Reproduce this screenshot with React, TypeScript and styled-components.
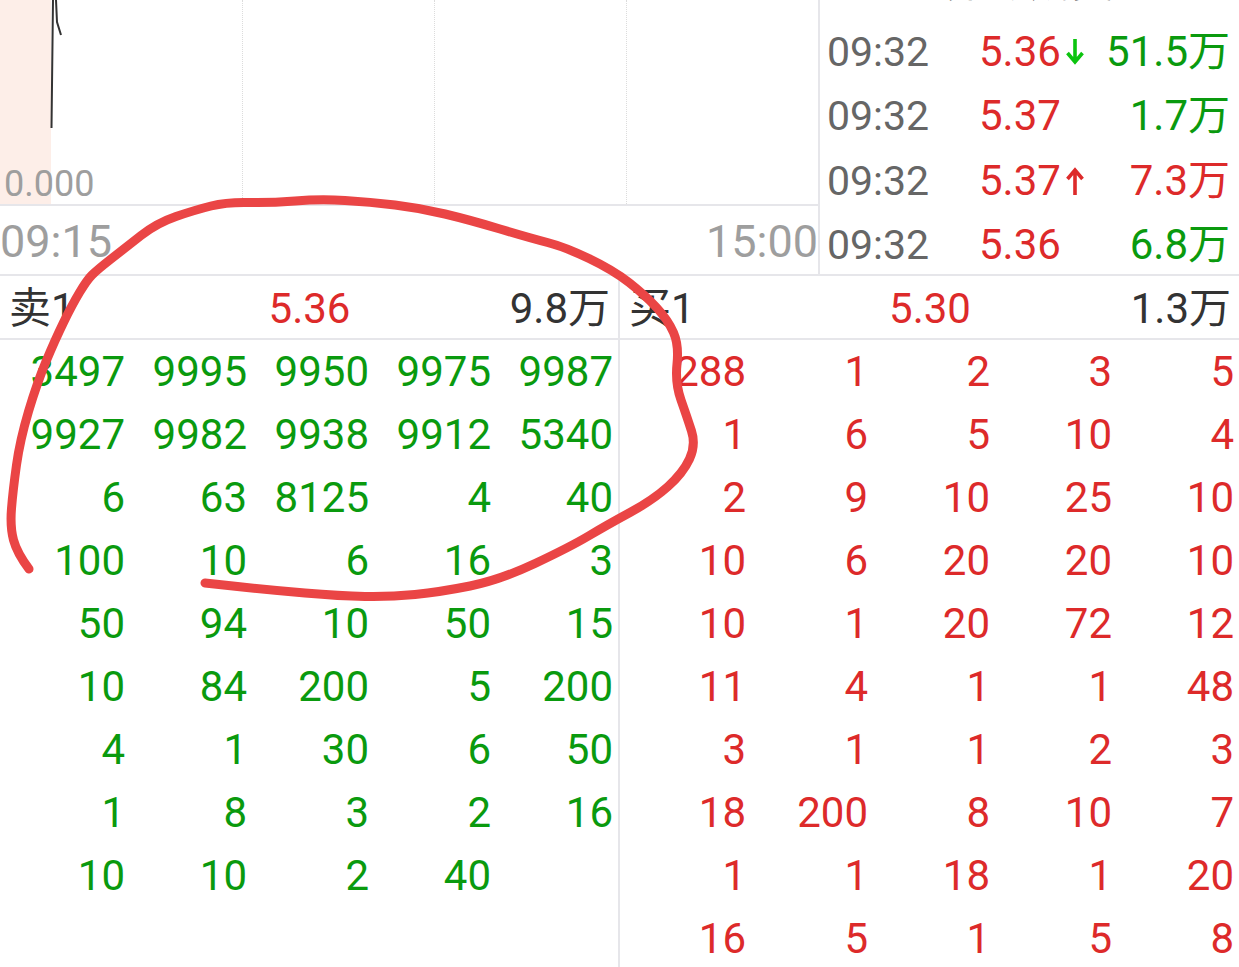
import styled, { createGlobalStyle } from 'styled-components'

const GREEN = '#0a9a0e'
const RED = '#dd2a2a'
const LINE = '#e6e6ea'

const GlobalStyle = createGlobalStyle`
  html, body {
    margin: 0;
    padding: 0;
    background: #fff;
    overflow: hidden;
  }
  body {
    font-family: Roboto, "Noto Sans CJK SC", sans-serif;
  }
`

const Screen = styled.div`
  position: relative;
  width: 1239px;
  height: 967px;
  overflow: hidden;
  font-size: 42px;
  line-height: 50px;
  background: #fff;
`

const Top = styled.div`
  display: flex;
  height: 276px;
  box-sizing: border-box;
  border-bottom: 2px solid ${LINE};
`

const ChartPane = styled.div`
  width: 820px;
  flex: none;
  box-sizing: border-box;
  border-right: 2px solid ${LINE};
`

const Plot = styled.div`
  position: relative;
  display: flex;
  height: 206px;
  box-sizing: border-box;
  border-bottom: 2px solid ${LINE};
`

const Band = styled.div`
  width: 51px;
  flex: none;
  background: #fdeee8;
`

const GridCell = styled.div`
  width: 192px;
  flex: none;
  box-sizing: border-box;
  border-right: 1px dotted #dcdcdc;
`

const PriceLine = styled.svg`
  position: absolute;
  left: 0;
  top: 0;
`

const ZeroLabel = styled.span`
  position: absolute;
  left: 4px;
  top: 163px;
  font-size: 36px;
  line-height: 42px;
  color: #9e9e9e;
`

const Axis = styled.div`
  display: flex;
  justify-content: space-between;
  align-items: center;
  height: 68px;
  padding-top: 3px;
  box-sizing: border-box;
  font-size: 45px;
  color: #9e9e9e;
`

const TickPane = styled.div`
  flex: 1;
  padding-top: 20px;
  position: relative;
`

const TickTitle = styled.div`
  position: absolute;
  left: 0;
  right: 0;
  top: 0;
  height: 4px;
  overflow: hidden;
  display: flex;
  justify-content: center;
  align-items: flex-end;
  line-height: 42px;
  color: #555;
`

const TickRow = styled.div`
  display: flex;
  align-items: center;
  height: 64.3px;
  padding: 0 9px 0 7px;
`

const TickTime = styled.span`
  width: 152px;
  flex: none;
  font-size: 41px;
  color: #666;
`

const TickPrice = styled.span`
  display: flex;
  align-items: center;
  color: ${RED};
  flex: 1;
`

const Volume = styled.span<{ $up?: boolean }>`
  color: ${({ $up }) => ($up ? RED : GREEN)};
`

const Book = styled.div`
  display: flex;
  height: 691px;
`

const Side = styled.div<{ $divided?: boolean }>`
  width: ${({ $divided }) => ($divided ? '620px' : '619px')};
  flex: none;
  box-sizing: border-box;
  border-right: ${({ $divided }) => ($divided ? `2px solid ${LINE}` : 'none')};
`

const BestRow = styled.div`
  display: grid;
  grid-template-columns: 1fr auto 1fr;
  align-items: center;
  height: 64px;
  box-sizing: border-box;
  border-bottom: 2px solid ${LINE};
  padding: 4px 8px 0 9px;
  color: #333;
`

const BestPrice = styled.span`
  color: ${RED};
`

const BestQty = styled.span`
  text-align: right;
`

const Orders = styled.div<{ $left: number; $right: number; $color: string }>`
  display: grid;
  grid-template-columns: repeat(5, 1fr);
  grid-auto-rows: 63px;
  align-items: center;
  padding: 0 ${({ $right }) => $right}px 0 ${({ $left }) => $left}px;
  color: ${({ $color }) => $color};
`

const Qty = styled.span`
  text-align: right;
`

const Scribble = styled.svg`
  position: absolute;
  left: 0;
  top: 0;
  pointer-events: none;
`

const ticks = [
  { price: '5.36', arrow: 'down', volume: '51.5万', up: false },
  { price: '5.37', arrow: '', volume: '1.7万', up: false },
  { price: '5.37', arrow: 'up', volume: '7.3万', up: true },
  { price: '5.36', arrow: '', volume: '6.8万', up: false },
]

const asks = [
  [3497, 9995, 9950, 9975, 9987],
  [9927, 9982, 9938, 9912, 5340],
  [6, 63, 8125, 4, 40],
  [100, 10, 6, 16, 3],
  [50, 94, 10, 50, 15],
  [10, 84, 200, 5, 200],
  [4, 1, 30, 6, 50],
  [1, 8, 3, 2, 16],
  [10, 10, 2, 40, ''],
]

const bids = [
  [288, 1, 2, 3, 5],
  [1, 6, 5, 10, 4],
  [2, 9, 10, 25, 10],
  [10, 6, 20, 20, 10],
  [10, 1, 20, 72, 12],
  [11, 4, 1, 1, 48],
  [3, 1, 1, 2, 3],
  [18, 200, 8, 10, 7],
  [1, 1, 18, 1, 20],
  [16, 5, 1, 5, 8],
]

const scribblePoints = [
  [29, 569], [17, 553], [10, 527], [13, 490], [20, 440], [37, 383], [55, 340], [72, 305],
  [87, 280], [97, 270], [125, 248], [157, 223], [195, 210], [227, 202], [270, 203], [320, 199],
  [370, 202], [420, 208], [470, 220], [530, 238], [565, 247], [613, 270], [645, 295],
  [668, 320], [679, 345], [675, 383], [687, 417], [696, 445], [683, 473], [653, 500], [607, 525],
  [570, 547], [500, 580], [440, 592], [390, 597], [340, 596], [270, 590], [205, 583],
]

const smoothPath = (points: number[][]) => {
  let d = `M${points[0][0]} ${points[0][1]}`
  for (let i = 1; i < points.length - 1; i++) {
    const midX = (points[i][0] + points[i + 1][0]) / 2
    const midY = (points[i][1] + points[i + 1][1]) / 2
    d += ` Q${points[i][0]} ${points[i][1]} ${midX} ${midY}`
  }
  const last = points[points.length - 1]
  return `${d} L${last[0]} ${last[1]}`
}

const Arrow = ({ dir }: { dir: string }) => (
  <svg width="22" height="30" viewBox="0 0 22 30" style={{ marginLeft: 3 }}>
    {dir === 'down' ? (
      <path d="M11 2V25M3.5 16L11 25L18.5 16" fill="none" stroke="#0cc40f" strokeWidth="3.6" />
    ) : (
      <path d="M11 29V4M3.5 13L11 4L18.5 13" fill="none" stroke={RED} strokeWidth="3.6" />
    )}
  </svg>
)

export default function App() {
  return (
    <Screen>
      <GlobalStyle />
      <Top>
        <ChartPane>
          <Plot>
            <Band />
            <GridCell />
            <GridCell />
            <GridCell />
            <PriceLine width="70" height="130">
              <path d="M51.5 128L53 0M56 0L57 22L61 35" fill="none" stroke="#333" strokeWidth="2" />
            </PriceLine>
            <ZeroLabel>0.000</ZeroLabel>
          </Plot>
          <Axis>
            <span>09:15</span>
            <span>15:00</span>
          </Axis>
        </ChartPane>
        <TickPane>
          <TickTitle>
            <span>分时成交</span>
          </TickTitle>
          {ticks.map((tick, i) => (
            <TickRow key={i}>
              <TickTime>09:32</TickTime>
              <TickPrice>
                {tick.price}
                {tick.arrow && <Arrow dir={tick.arrow} />}
              </TickPrice>
              <Volume $up={tick.up}>{tick.volume}</Volume>
            </TickRow>
          ))}
        </TickPane>
      </Top>
      <Book>
        <Side $divided>
          <BestRow>
            <span>卖1</span>
            <BestPrice>5.36</BestPrice>
            <BestQty>9.8万</BestQty>
          </BestRow>
          <Orders $left={3} $right={5} $color={GREEN}>
            {asks.flat().map((n, i) => (
              <Qty key={i}>{n}</Qty>
            ))}
          </Orders>
        </Side>
        <Side>
          <BestRow>
            <span>买1</span>
            <BestPrice>5.30</BestPrice>
            <BestQty>1.3万</BestQty>
          </BestRow>
          <Orders $left={4} $right={5} $color={RED}>
            {bids.flat().map((n, i) => (
              <Qty key={i}>{n}</Qty>
            ))}
          </Orders>
        </Side>
      </Book>
      <Scribble width="1239" height="967">
        <path
          d={smoothPath(scribblePoints)}
          fill="none"
          stroke="#ea4545"
          strokeWidth="9"
          strokeLinecap="round"
          strokeLinejoin="round"
        />
      </Scribble>
    </Screen>
  )
}
